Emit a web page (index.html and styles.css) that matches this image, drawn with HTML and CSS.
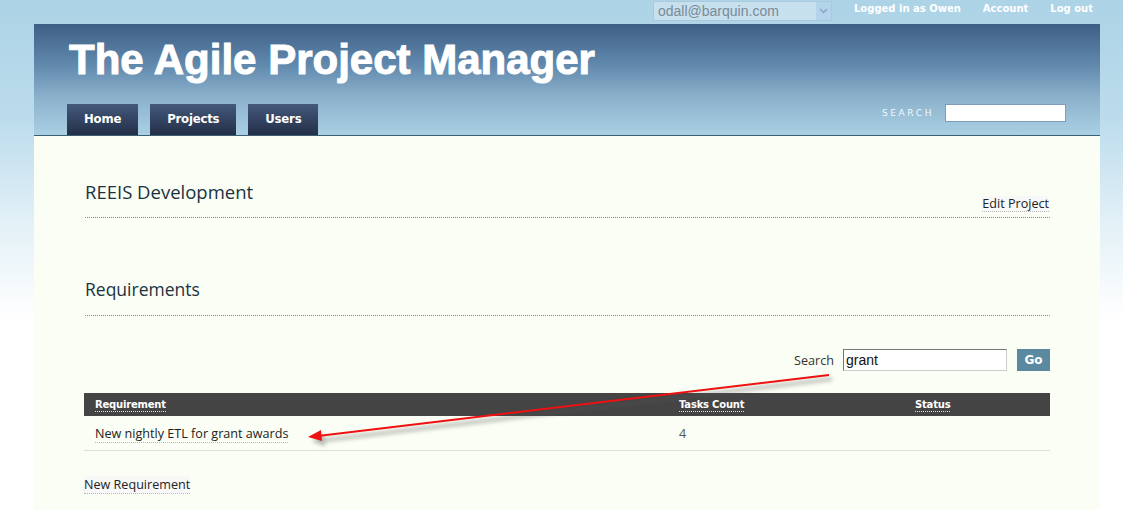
FILE: index.html
```html
<!DOCTYPE html>
<html>
<head>
<meta charset="utf-8">
<link rel="stylesheet" href="styles.css">
</head>
<body>
<div class="page">
  <div class="topbar">
    <div class="select"><span>odall@barquin.com</span><span class="arrow"><svg width="9" height="6" viewBox="0 0 9 6"><path d="M1 1 L4.5 4.5 L8 1" fill="none" stroke="#8aa6bd" stroke-width="1.5"/></svg></span></div>
    <a class="toplink" href="#">Logged in as Owen</a>
    <a class="toplink" href="#">Account</a>
    <a class="toplink" href="#">Log out</a>
  </div>
  <div class="header">
    <h1 class="title">The Agile Project Manager</h1>
    <div class="navrow">
      <nav class="nav">
        <a class="tab" href="#">Home</a>
        <a class="tab" href="#">Projects</a>
        <a class="tab" href="#">Users</a>
      </nav>
      <div class="hsearch"><span class="hlabel">SEARCH</span><span class="hinput"></span></div>
    </div>
  </div>
  <div class="content">
    <div class="section first">
      <h2 class="stitle">REEIS Development</h2>
      <a class="link edit" href="#">Edit Project</a>
    </div>
    <div class="section second">
      <h2 class="stitle">Requirements</h2>
    </div>
    <div class="searchrow">
      <span class="slabel">Search</span>
      <span class="sinput">grant</span>
      <span class="go">Go</span>
    </div>
    <table class="grid">
      <thead>
        <tr><th class="c1"><span>Requirement</span></th><th class="c2"><span>Tasks Count</span></th><th class="c3"><span>Status</span></th></tr>
      </thead>
      <tbody>
        <tr><td><a class="link" href="#">New nightly ETL for grant awards</a></td><td class="num">4</td><td></td></tr>
      </tbody>
    </table>
    <div class="newrow"><a class="link" href="#">New Requirement</a></div>
  </div>
</div>
<svg class="arrow-overlay" width="1123" height="511" viewBox="0 0 1123 511">
  <defs>
    <filter id="sh" x="-10%" y="-50%" width="120%" height="200%">
      <feGaussianBlur stdDeviation="2"/>
    </filter>
  </defs>
  <g filter="url(#sh)" opacity="0.45">
    <line x1="832" y1="379" x2="318" y2="441" stroke="#555" stroke-width="3"/>
    <path d="M312 441 L324 434 L325 446 Z" fill="#555"/>
  </g>
  <line x1="829" y1="375" x2="318" y2="436" stroke="#ee1111" stroke-width="2"/>
  <path d="M308 437 L321 430 L322 441 Z" fill="#ee1111"/>
</svg>
</body>
</html>
```
FILE: styles.css
```css
html, body { margin: 0; padding: 0; }
body {
  background: linear-gradient(#acd3e6 0px, #bcdcec 120px, #e2f0f7 220px, #ffffff 320px) no-repeat;
  background-color: #fff;
  height: 511px;
  font-family: "Open Sans", "DejaVu Sans", sans-serif;
  position: relative;
  overflow: hidden;
}
.page {
  margin-left: 34px;
  width: 1066px;
}
.topbar {
  height: 24px;
  display: flex;
  align-items: flex-start;
  padding-left: 619px;
  white-space: nowrap;
}
.select {
  margin-top: 1px;
  height: 18px;
  border: 1px solid #a9c9dc;
  background: #c6e0ee;
  display: flex;
  align-items: center;
  justify-content: space-between;
  font-family: "Liberation Sans", Arial, sans-serif;
  font-size: 14px;
  color: #7a8a96;
  padding-left: 4px;
  width: 173px;
  flex-shrink: 0;
}
.select .arrow {
  width: 15px;
  height: 18px;
  background: #b3d4ea;
  display: flex;
  align-items: center;
  justify-content: center;
}
.toplink {
  color: #fff;
  text-decoration: none;
  font-family: "DejaVu Sans", sans-serif;
  font-weight: bold;
  font-size: 10px;
  letter-spacing: 0px;
  line-height: 18px;
  margin-left: 22px;
  flex-shrink: 0;
}
.header {
  height: 111px;
  background: linear-gradient(#3e5e86 0px, #6088ac 40px, #8db3cd 75px, #a9d0e4 111px);
  border-bottom: 1px solid #3b5f6e;
  display: flex;
  flex-direction: column;
}
.title {
  margin: 0;
  padding: 12px 0 0 35px;
  height: 66px;
  box-sizing: border-box;
  font-family: "Liberation Sans", Arial, sans-serif;
  font-weight: bold;
  font-size: 42px;
  line-height: 48px;
  color: #fff;
  letter-spacing: 0px;
  -webkit-text-stroke: 1px #fff;
}
.navrow {
  margin-top: 14px;
  display: flex;
  justify-content: space-between;
  align-items: flex-start;
  padding-left: 33px;
  padding-right: 34px;
  flex: 1;
}
.nav { display: flex; gap: 12px; align-self: flex-end; }
.tab {
  display: block;
  height: 31px;
  line-height: 31px;
  padding: 0 17px;
  background: linear-gradient(#44597c, #232f47);
  color: #fff;
  text-decoration: none;
  font-family: "DejaVu Sans", sans-serif;
  font-weight: bold;
  font-size: 11.7px;
  letter-spacing: -0.2px;
}
.hsearch { display: flex; align-items: center; gap: 11px; }
.hlabel {
  color: #f4f8fb;
  font-family: "DejaVu Sans", sans-serif;
  font-size: 9px;
  letter-spacing: 2.6px;
}
.hinput {
  width: 119px;
  height: 16px;
  background: #fff;
  border: 1px solid #7f9cb8;
}
.content {
  background: #fafef4;
  padding: 44px 50px 19px 50px;
  height: 374px;
  box-sizing: border-box;
}
.section {
  margin-left: 1px;
  border-bottom: 1px dotted #888;
  display: flex;
  justify-content: space-between;
  align-items: flex-end;
}
.first { height: 37px; }
.second { margin-top: 59px; height: 38px; }
.stitle {
  margin: 0;
  font-weight: normal;
  font-size: 18.5px;
  color: #1b3242;
  font-family: "Open Sans", sans-serif;
  line-height: 24px;
  align-self: flex-start;
}
.second .stitle { font-size: 17.5px; }
.link {
  color: #222;
  text-decoration: none;
  font-size: 12.6px;
  border-bottom: 1px dotted #bbb;
  background: #f8f8f8;
  line-height: 15px;
}
.edit { margin-bottom: 5px; margin-right: 1px; }
.searchrow {
  margin-top: 32px;
  display: flex;
  justify-content: flex-end;
  align-items: center;
  height: 24px;
}
.slabel { font-size: 12.6px; color: #333; margin-right: 9px; }
.sinput {
  width: 160px;
  height: 20px;
  border: 1px solid #999;
  border-top-color: #777;
  border-left-color: #777;
  border-right-color: #ccc;
  border-bottom-color: #ccc;
  background: #fff;
  font-family: "Liberation Sans", Arial, sans-serif;
  font-size: 14px;
  line-height: 20px;
  padding-left: 2px;
  color: #111;
  margin-right: 10px;
}
.go {
  background: #5b8aa0;
  color: #fff;
  font-family: "DejaVu Sans", sans-serif;
  font-weight: bold;
  font-size: 12px;
  width: 33px;
  height: 22px;
  line-height: 22px;
  text-align: center;
}
.grid {
  margin-top: 21px;
  width: 100%;
  border-collapse: collapse;
}
.grid th {
  background: #444444;
  height: 23px;
  text-align: left;
  padding: 0 0 0 11px;
  color: #fff;
  font-family: "DejaVu Sans", sans-serif;
  font-weight: bold;
  font-size: 10px;
  letter-spacing: -0.2px;
}
.grid th span { border-bottom: 1px dotted #ddd; padding-bottom: 1px; }
.grid th.c1 { width: 573px; }
.grid th.c2 { width: 225px; }
.grid td {
  height: 34px;
  padding: 0 0 0 11px;
  border-bottom: 1px solid #ddd;
  font-size: 12.6px;
}
.grid td .link { background: transparent; }
.grid td.num { color: #555; }
.newrow { margin-top: 21px; }
.arrow-overlay {
  position: absolute;
  left: 0;
  top: 0;
  pointer-events: none;
}
```
